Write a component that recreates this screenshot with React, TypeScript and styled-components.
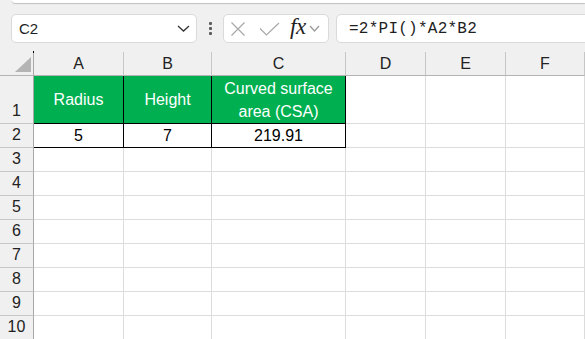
import { Fragment } from 'react'
import styled, { createGlobalStyle } from 'styled-components'

const GlobalStyle = createGlobalStyle`
	html, body {
		margin: 0;
		padding: 0;
		background: #f0f0f0;
		overflow: hidden;
	}
	body {
		font-family: 'Liberation Sans', Arial, sans-serif;
	}
`

const Page = styled.div`
	width: 585px;
	height: 339px;
	overflow: hidden;
	background: #f0f0f0;
`

const Ribbon = styled.div`
	height: 3px;
	margin-left: 12px;
	background: #fff;
	border-bottom-left-radius: 6px;
	box-shadow: 0 1px 1px rgba(0, 0, 0, 0.2);
`

const FormulaBar = styled.div`
	display: flex;
	align-items: stretch;
	height: 29px;
	margin-top: 11px;
	padding-left: 11px;
`

const Box = styled.div`
	box-sizing: border-box;
	display: flex;
	align-items: center;
	background: #fff;
	border: 1px solid #dadada;
	border-radius: 5px;
`

const NameBox = styled(Box)`
	width: 186px;
	justify-content: space-between;
	padding: 0 6px 0 7px;
	font-size: 15px;
	color: #1f1f1f;
`

const Grip = styled.div`
	display: flex;
	flex-direction: column;
	justify-content: center;
	gap: 2px;
	margin: 0 11px 0 12px;
`

const GripDot = styled.span`
	width: 3px;
	height: 3px;
	border-radius: 1px;
	background: #5c5c5c;
`

const FxBox = styled(Box)`
	width: 106px;
	padding-left: 6px;
`

const Fx = styled.span`
	font-family: 'Liberation Serif', 'Times New Roman', serif;
	font-style: italic;
	font-size: 23px;
	color: #1e1e1e;
	margin: -3px 3px 0 10px;
	letter-spacing: -0.5px;
`

const FormulaInput = styled(Box)`
	flex: 1;
	margin-left: 7px;
	margin-right: -6px;
	padding-left: 12px;
	font-family: 'Liberation Mono', 'Courier New', monospace;
	font-size: 16px;
	letter-spacing: 0.25px;
	color: #1f1f1f;
`

const Sheet = styled.div`
	display: grid;
	grid-template-columns: 34px 90px 88px 134px 80px 80px 1fr;
	grid-template-rows: 24px 48px repeat(9, 24px);
	margin-top: 9px;
	background: #fff;
	font-size: 16px;
`

const Corner = styled.div`
	position: relative;
	box-sizing: border-box;
	display: flex;
	justify-content: flex-end;
	align-items: flex-end;
	padding: 0 2px 3px 0;
	background: #f0f0f0;
	border-right: 1px solid #a8a8a8;
	border-bottom: 1px solid #b4b4b4;

	&::before {
		content: '';
		position: absolute;
		top: -1px;
		right: -1px;
		width: 1px;
		height: 2px;
		background: #000;
	}
`

const Triangle = styled.div`
	width: 16px;
	height: 15px;
	background: #b4b4b4;
	clip-path: polygon(100% 0, 100% 100%, 0 100%);
`

const ColHead = styled.div`
	box-sizing: border-box;
	display: flex;
	align-items: center;
	justify-content: center;
	background: #f0f0f0;
	color: #222;
	border-right: 1px solid #c6c6c6;
	border-bottom: 1px solid #b4b4b4;
`

const RowHead = styled.div`
	box-sizing: border-box;
	display: flex;
	align-items: flex-end;
	justify-content: center;
	padding-bottom: 2px;
	line-height: 20px;
	background: #f0f0f0;
	color: #222;
	border-right: 1px solid #a8a8a8;
	border-bottom: 1px solid #c8c8c8;
`

const Cell = styled.div<{ $fill?: string; $edge?: boolean }>`
	box-sizing: border-box;
	display: flex;
	align-items: center;
	justify-content: center;
	text-align: center;
	padding: 0 4px;
	line-height: 23px;
	background: ${(p) => p.$fill || '#fff'};
	color: ${(p) => (p.$fill ? '#fff' : '#000')};
	border-right: 1px solid ${(p) => (p.$edge ? '#000' : '#dcdcdc')};
	border-bottom: 1px solid ${(p) => (p.$edge ? '#000' : '#dcdcdc')};
`

const GREEN = '#00b050'
const columns = ['A', 'B', 'C', 'D', 'E', 'F']

const table: Record<number, { text: string; fill?: string }[]> = {
	1: [
		{ text: 'Radius', fill: GREEN },
		{ text: 'Height', fill: GREEN },
		{ text: 'Curved surface area (CSA)', fill: GREEN },
	],
	2: [{ text: '5' }, { text: '7' }, { text: '219.91' }],
}

const Chevron = ({ w, color }: { w: number; color: string }) => (
	<svg width={w} height={7} viewBox={`0 0 ${w} 7`} fill='none'>
		<polyline points={`1,1 ${w / 2},6 ${w - 1},1`} stroke={color} strokeWidth={1.3} />
	</svg>
)

export default function App() {
	const rows = Array.from({ length: 10 }, (_, i) => i + 1)
	return (
		<Page>
			<GlobalStyle />
			<Ribbon />
			<FormulaBar>
				<NameBox>
					<span>C2</span>
					<Chevron w={13} color='#333' />
				</NameBox>
				<Grip>
					<GripDot />
					<GripDot />
					<GripDot />
				</Grip>
				<FxBox>
					<svg width={16} height={16} viewBox='0 0 16 16' fill='none'>
						<path d='M1.5 1.5 L14.5 14.5 M14.5 1.5 L1.5 14.5' stroke='#a8a8a8' strokeWidth={1.2} />
					</svg>
					<svg width={21} height={14} viewBox='0 0 21 14' fill='none' style={{ marginLeft: 13 }}>
						<polyline points='1,6.5 7.5,13 20,1' stroke='#a8a8a8' strokeWidth={1.2} />
					</svg>
					<Fx>fx</Fx>
					<Chevron w={11} color='#9a9a9a' />
				</FxBox>
				<FormulaInput>=2*PI()*A2*B2</FormulaInput>
			</FormulaBar>
			<Sheet>
				<Corner>
					<Triangle />
				</Corner>
				{columns.map((c) => (
					<ColHead key={c}>{c}</ColHead>
				))}
				{rows.map((r) => (
					<Fragment key={r}>
						<RowHead>{r}</RowHead>
						{columns.map((c, ci) => {
							const data = table[r]?.[ci]
							return (
								<Cell key={`${c}${r}`} $fill={data?.fill} $edge={!!data}>
									{data?.text}
								</Cell>
							)
						})}
					</Fragment>
				))}
			</Sheet>
		</Page>
	)
}
